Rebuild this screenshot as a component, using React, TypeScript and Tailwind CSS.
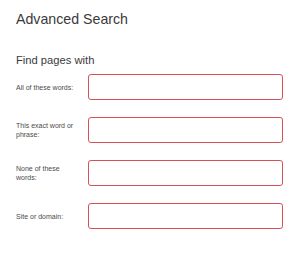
import React from "react";

const rows: string[] = [
  "All of these words:",
  "This exact word or phrase:",
  "None of these words:",
  "Site or domain:",
];

export default function App() {
  return (
    <div
      className="w-[300px] h-[257px] bg-white pl-4 pt-[9px] text-[#333]"
      style={{ fontFamily: '"Liberation Sans", Arial, sans-serif' }}
    >
      <h1 className="text-[14.2px] leading-[20px] text-[#3a3a3a]">Advanced Search</h1>
      <h2 className="mt-[23px] text-[11.2px] leading-[16px] text-[#3a3a3a]">Find pages with</h2>
      <div className="mt-[6px] flex flex-col gap-[17px]">
        {rows.map((label) => (
          <div key={label} className="flex items-center">
            <label className="w-[72px] pr-[12px] text-[7px] leading-[9px] text-[#4a4a4a]">
              {label}
            </label>
            <input
              type="text"
              className="h-[26px] w-[195px] rounded-[3px] border-[1.5px] border-[#d6505a] bg-white outline-none"
            />
          </div>
        ))}
      </div>
    </div>
  );
}
